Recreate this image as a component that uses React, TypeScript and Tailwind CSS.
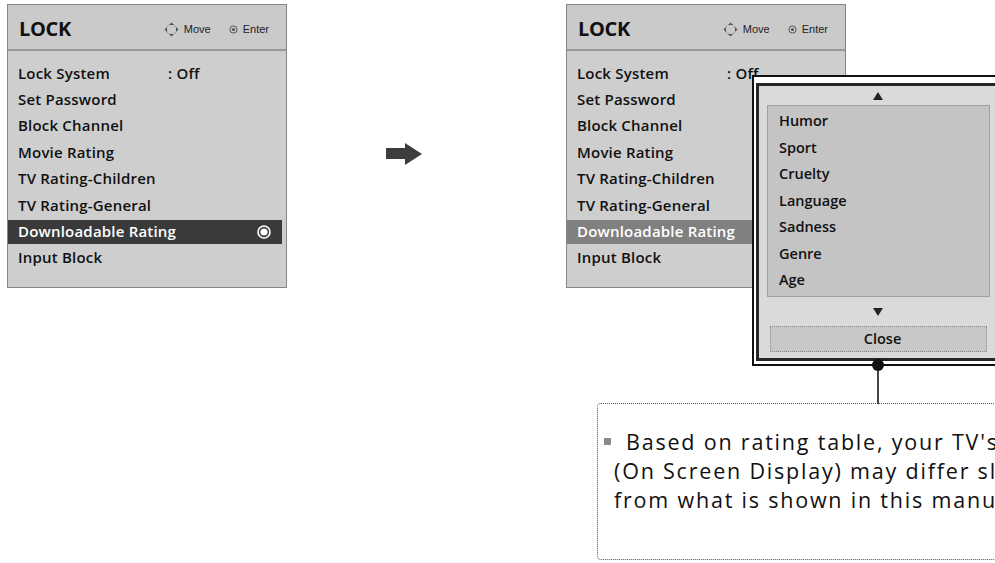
import React from "react";

const items = [
  "Lock System",
  "Set Password",
  "Block Channel",
  "Movie Rating",
  "TV Rating-Children",
  "TV Rating-General",
  "Downloadable Rating",
  "Input Block",
];

const popupItems = ["Humor", "Sport", "Cruelty", "Language", "Sadness", "Genre", "Age"];

function MoveIcon() {
  return (
    <svg width="15" height="15" viewBox="0 0 15 15">
      <circle cx="7.5" cy="7.5" r="5" fill="none" stroke="#777" strokeWidth="1" strokeDasharray="1.5 1.5" />
      <path d="M7.5 0.5 L10 3 H5Z" fill="#555" />
      <path d="M7.5 14.5 L10 12 H5Z" fill="#555" />
      <path d="M0.5 7.5 L3 5 V10Z" fill="#555" />
      <path d="M14.5 7.5 L12 5 V10Z" fill="#555" />
    </svg>
  );
}

function EnterIcon() {
  return (
    <svg width="9" height="9" viewBox="0 0 9 9">
      <circle cx="4.5" cy="4.5" r="3.6" fill="none" stroke="#555" strokeWidth="1" />
      <circle cx="4.5" cy="4.5" r="1.6" fill="#555" />
    </svg>
  );
}

function Radio() {
  return (
    <svg width="14" height="14" viewBox="0 0 14 14">
      <circle cx="7" cy="7" r="6" fill="none" stroke="#fff" strokeWidth="1.6" />
      <circle cx="7" cy="7" r="3.6" fill="#fff" />
    </svg>
  );
}

function Panel({ variant }: { variant: "dark" | "light" }) {
  return (
    <div className="w-[280px] h-[284px] border border-[#858585] bg-[#cecece] flex flex-col font-['Open_Sans',sans-serif]">
      <div className="h-[46px] shrink-0 flex items-center justify-between pl-[11px] pr-[17px] border-b-2 border-[#9a9a9a] bg-[#cacaca]">
        <span className="text-[20px] font-bold text-[#111] leading-none pt-[3px] tracking-[-0.3px]">LOCK</span>
        <div className="flex items-center text-[11px] text-[#222] pt-[4px] font-['Liberation_Sans',sans-serif]">
          <MoveIcon />
          <span className="ml-[5px]">Move</span>
          <span className="ml-[18px] flex items-center">
            <EnterIcon />
          </span>
          <span className="ml-[5px]">Enter</span>
        </div>
      </div>
      <div className="flex flex-col pt-[9px]">
        {items.map((it, i) => {
          const hi = i === 6;
          if (hi) {
            return (
              <div key={it} className="h-[26.4px] flex items-center">
                <div
                  className={
                    "h-[24px] w-full mr-[4px] flex items-center justify-between pl-[10px] pr-[11px] text-white " +
                    (variant === "dark" ? "bg-[#3a3a3a]" : "bg-[#808080]")
                  }
                >
                  <span className="text-[15px] font-semibold leading-none tracking-[0.2px]">{it}</span>
                  {variant === "dark" && <Radio />}
                </div>
              </div>
            );
          }
          return (
            <div key={it} className="h-[26.4px] flex items-center pl-[10px] text-[#111]">
              <span className="w-[150px] text-[15px] font-semibold leading-none tracking-[0.2px]">{it}</span>
              {i === 0 && <span className="text-[15px] font-semibold leading-none tracking-[0.2px]">: Off</span>}
            </div>
          );
        })}
      </div>
    </div>
  );
}

function Popup() {
  return (
    <div className="absolute left-[186px] top-[71px] w-[252px] h-[291px]">
      <div className="w-full h-full border-2 border-[#111] bg-white pt-[6px] pl-[2px] pr-[2px] pb-[3px] flex">
        <div className="flex-1 border-[3px] border-[#262626] bg-[#dadada] flex flex-col font-['Open_Sans',sans-serif]">
          <div className="h-[19px] flex items-center justify-center">
            <svg width="10" height="8" viewBox="0 0 10 8">
              <path d="M5 0 L10 8 H0Z" fill="#222" />
            </svg>
          </div>
          <div className="h-[192px] ml-[8px] mr-[7px] bg-[#c4c4c4] border border-[#a0a0a0] pt-[2px] flex flex-col">
            {popupItems.map((p) => (
              <div key={p} className="h-[26.5px] flex items-center pl-[11px] text-[14.5px] font-semibold text-[#111] leading-none">
                {p}
              </div>
            ))}
          </div>
          <div className="h-[29px] flex items-center justify-center">
            <svg width="10" height="8" viewBox="0 0 10 8">
              <path d="M0 0 H10 L5 8Z" fill="#222" />
            </svg>
          </div>
          <div className="h-[26px] ml-[11px] mr-[10px] bg-[#c8c8c8] border border-dotted border-[#8a8a8a] flex items-center justify-center text-[14.5px] font-semibold text-[#111] leading-none pl-[8px]">
            Close
          </div>
        </div>
      </div>
      <div className="absolute left-[125px] top-[291px] w-[2px] h-[38px] bg-[#444]" />
      <div className="absolute left-[120px] top-[284px] w-[12px] h-[12px] rounded-full bg-[#111]" />
    </div>
  );
}

export default function App() {
  return (
    <div className="relative w-[995px] h-[563px] overflow-hidden bg-white">
      <div className="flex items-start pl-[7px] pt-[4px]">
        <Panel variant="dark" />
        <div className="ml-[99px] mt-[139px] shrink-0">
          <svg width="36" height="22" viewBox="0 0 36 22">
            <path d="M0 5 H19 V0 L36 11 L19 22 V16 H0Z" fill="#3d3d3d" />
          </svg>
        </div>
        <div className="relative ml-[144px] shrink-0">
          <Panel variant="light" />
          <Popup />
        </div>
      </div>
      <div className="ml-[597px] mt-[115px] w-[560px] h-[157px] border border-dotted border-[#555] rounded-[4px] pt-[23px] pl-[16px] font-['Open_Sans',sans-serif] text-[21.5px] leading-[29px] tracking-[1.8px] text-[#111] whitespace-nowrap">
        <div className="flex items-center -ml-[10px]">
          <span className="inline-block w-[7px] h-[7px] bg-[#8a8a8a] mr-[15px]" />
          <span>Based on rating table, your TV's OSD</span>
        </div>
        <div>(On Screen Display) may differ slightly</div>
        <div>from what is shown in this manual.</div>
      </div>
    </div>
  );
}
